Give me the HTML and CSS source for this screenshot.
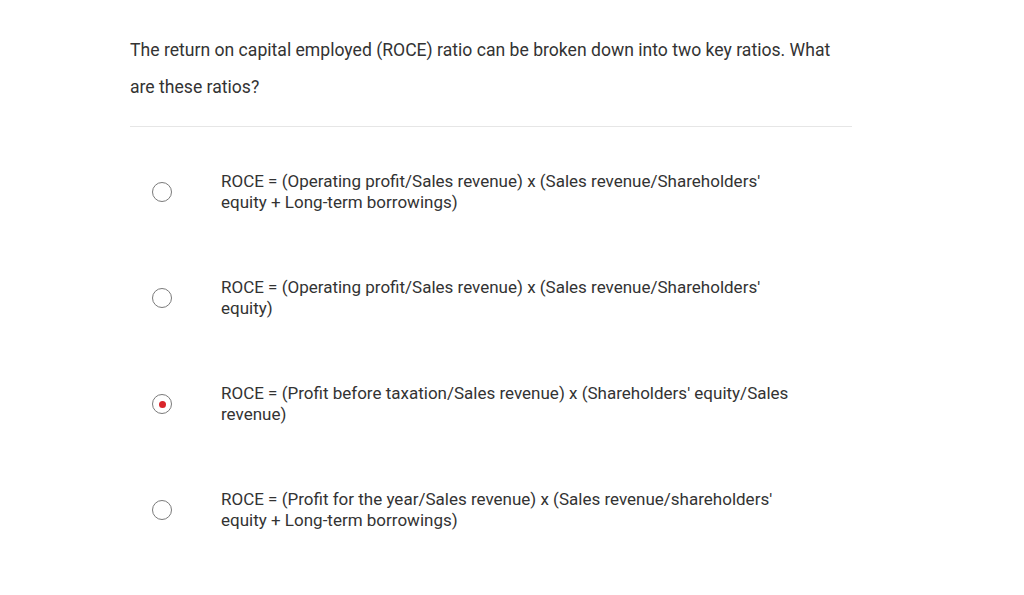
FILE: index.html
```html
<!DOCTYPE html>
<html>
<head>
<meta charset="utf-8">
<link rel="stylesheet" href="styles.css">
</head>
<body>
<div class="quiz">
  <div class="question">The return on capital employed (ROCE) ratio can be broken down into two key ratios. What are these ratios?</div>
  <div class="options">
    <label class="option">
      <span class="radio"></span>
      <span class="text">ROCE = (Operating profit/Sales revenue) x (Sales revenue/Shareholders' equity + Long-term borrowings)</span>
    </label>
    <label class="option">
      <span class="radio"></span>
      <span class="text">ROCE = (Operating profit/Sales revenue) x (Sales revenue/Shareholders' equity)</span>
    </label>
    <label class="option">
      <span class="radio checked"></span>
      <span class="text">ROCE = (Profit before taxation/Sales revenue) x (Shareholders' equity/Sales revenue)</span>
    </label>
    <label class="option">
      <span class="radio"></span>
      <span class="text">ROCE = (Profit for the year/Sales revenue) x (Sales revenue/shareholders' equity + Long-term borrowings)</span>
    </label>
  </div>
</div>
</body>
</html>
```
FILE: styles.css
```css
html, body {
  margin: 0;
  padding: 0;
  background: #ffffff;
}
body {
  font-family: Roboto, "Liberation Sans", sans-serif;
  color: #333333;
}
.quiz {
  width: 722px;
  margin-left: 130px;
  padding-top: 32px;
}
.question {
  font-size: 17.6px;
  line-height: 37px;
  padding-bottom: 20px;
  border-bottom: 1px solid #e6e6e6;
}
.options {
  padding-top: 12px;
}
.option {
  display: flex;
  align-items: center;
  padding: 32px 0 32px 22px;
}
.radio {
  flex: none;
  width: 20px;
  height: 20px;
  box-sizing: border-box;
  border: 1px solid #7a7a7a;
  border-radius: 50%;
  display: flex;
  align-items: center;
  justify-content: center;
  margin-right: 49px;
}
.radio.checked::after {
  content: "";
  width: 7px;
  height: 7px;
  border-radius: 50%;
  background: #d9252b;
}
.text {
  width: 580px;
  font-size: 17px;
  line-height: 21px;
}
```
